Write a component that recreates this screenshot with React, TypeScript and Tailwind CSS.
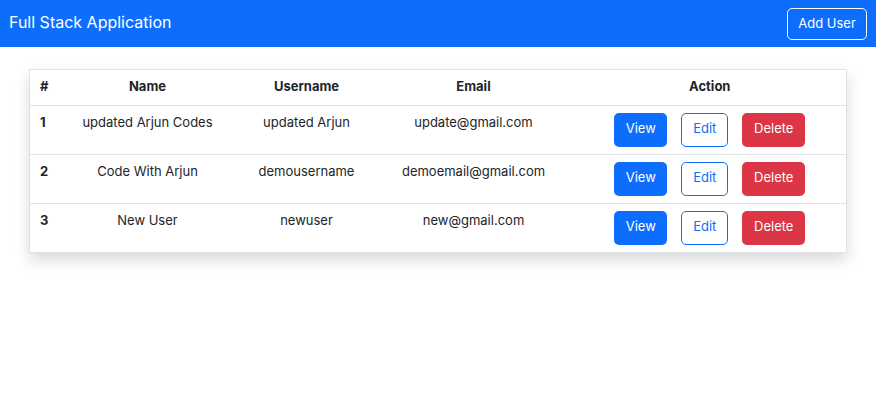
import React from 'react';

interface User {
  id: number;
  name: string;
  username: string;
  email: string;
}

const users: User[] = [
  { id: 1, name: 'updated Arjun Codes', username: 'updated Arjun', email: 'update@gmail.com' },
  { id: 2, name: 'Code With Arjun', username: 'demousername', email: 'demoemail@gmail.com' },
  { id: 3, name: 'New User', username: 'newuser', email: 'new@gmail.com' },
];

export default function App() {
  return (
    <div className="min-h-screen bg-white text-[#212529]" style={{ fontFamily: 'Inter, "Liberation Sans", sans-serif' }}>
      <nav className="h-[47px] bg-[#0d6efd] flex items-center justify-between pl-[9px] pr-[9px]">
        <span className="text-[16px] text-white leading-none mb-[3px]">Full Stack Application</span>
        <button className="h-[32px] w-[80px] border border-white rounded-[5px] text-white text-[13px]">Add User</button>
      </nav>

      <div className="px-[29px] pt-[22px]">
        <table className="w-full border border-[#dee2e6] border-collapse shadow-[0_7px_14px_rgba(0,0,0,0.15)] text-[13px]">
          <thead>
            <tr className="border-b border-[#dee2e6] h-[36px]">
              <th className="w-[26px] pl-[10px] pb-[2px] text-left font-bold">#</th>
              <th className="w-[184px] pb-[2px] font-bold">Name</th>
              <th className="w-[134px] pb-[2px] font-bold">Username</th>
              <th className="w-[200px] pb-[2px] font-bold">Email</th>
              <th className="pb-[2px] font-bold">Action</th>
            </tr>
          </thead>
          <tbody>
            {users.map((user) => (
              <tr key={user.id} className="border-b border-[#dee2e6] last:border-b-0 h-[48px]">
                <td className="pl-[10px] pt-[7px] align-top font-bold">{user.id}</td>
                <td className="pt-[7px] align-top text-center">{user.name}</td>
                <td className="pt-[7px] align-top text-center">{user.username}</td>
                <td className="pt-[7px] align-top text-center">{user.email}</td>
                <td className="pt-[7px] pb-[7px] align-top">
                  <div className="flex justify-center gap-[14px]">
                    <button className="h-[34px] w-[53px] pb-[3px] rounded-[5px] bg-[#0d6efd] text-white">View</button>
                    <button className="h-[34px] w-[47px] pb-[3px] rounded-[5px] border border-[#0d6efd] text-[#0d6efd]">Edit</button>
                    <button className="h-[34px] w-[63px] pb-[3px] rounded-[5px] bg-[#dc3545] text-white">Delete</button>
                  </div>
                </td>
              </tr>
            ))}
          </tbody>
        </table>
      </div>
    </div>
  );
}
